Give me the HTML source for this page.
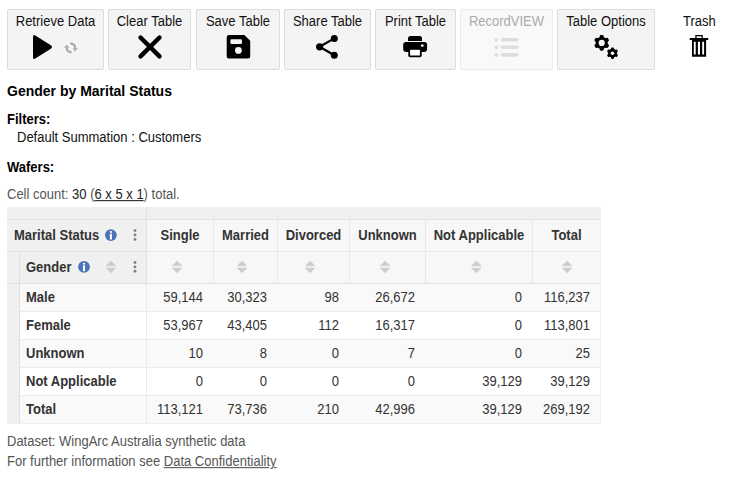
<!DOCTYPE html>
<html><head><meta charset="utf-8">
<style>
*{box-sizing:border-box;margin:0;padding:0}
html,body{width:752px;height:482px;overflow:hidden;background:#fff}
body{position:relative;font-family:"Liberation Sans",sans-serif;font-size:13px;color:#222}
.a{position:absolute;white-space:nowrap}
.btn{position:absolute;top:9px;height:61px;background:#f4f4f4;border:1px solid #dcdcdc;border-radius:2px}
.btn .l{position:absolute;left:0;right:0;top:4px;line-height:15px;text-align:center;color:#111}
.btn.dis{background:#f9f9f9;border-color:#ebebeb}
.btn.dis .l{color:#aaa}
svg{position:absolute;overflow:visible}
.t{font-size:13px;line-height:15px}
.b{font-weight:bold}
.tbl{position:absolute;left:7px;top:207px;width:594px;height:216px;background:#f0f0f0}
.hl{position:absolute;height:1px;background:#e2e2e2}
.vl{position:absolute;width:1px;background:#e6e6e6}
.hd{color:#333;font-weight:bold}
.num{color:#333;text-align:right}
.t,.btn .l{transform:scaleY(1.08);transform-origin:0 12px}
</style></head><body>

<!-- toolbar -->
<div class="btn" style="left:7px;width:97px"><div class="l">Retrieve Data</div></div>
<div class="btn" style="left:108px;width:83px"><div class="l">Clear Table</div></div>
<div class="btn" style="left:196px;width:84px"><div class="l">Save Table</div></div>
<div class="btn" style="left:284px;width:87px"><div class="l">Share Table</div></div>
<div class="btn" style="left:375px;width:81px"><div class="l">Print Table</div></div>
<div class="btn dis" style="left:460px;width:93px"><div class="l">RecordVIEW</div></div>
<div class="btn" style="left:557px;width:98px"><div class="l">Table Options</div></div>
<div class="a t" style="left:683px;top:14px;color:#111">Trash</div>

<!-- icons -->
<svg style="left:0;top:0" width="752" height="80" viewBox="0 0 752 80">
  <!-- play -->
  <path d="M35.3 35.4 L51.2 45.5 Q52.9 47 51.2 48.5 L35.3 58.6 Q33 59.8 33 57.4 L33 36.9 Q33 34.3 35.3 35.4 Z" fill="#000"/>
  <!-- sync -->
  <g fill="none" stroke="#a8a8a8" stroke-width="2.2">
    <path d="M70.3 43.6 A4.2 4.2 0 0 1 75.1 48.4"/>
    <path d="M71.6 52.2 A4.2 4.2 0 0 1 66.8 47.6"/>
  </g>
  <path d="M72.6 48.2 L77.8 48.2 L75.1 51.4 Z" fill="#a8a8a8"/>
  <path d="M64.1 47.8 L69.3 47.8 L66.7 44.5 Z" fill="#a8a8a8"/>
  <!-- x -->
  <g stroke="#000" stroke-width="4.4" stroke-linecap="round">
    <line x1="140.5" y1="37.5" x2="159.5" y2="56.4"/>
    <line x1="159.5" y1="37.5" x2="140.5" y2="56.4"/>
  </g>
  <!-- floppy -->
  <path fill="#000" fill-rule="evenodd" d="M229 35 L244.3 35 L250.2 40.8 L250.2 56.5 Q250.2 58.6 248.1 58.6 L228.8 58.6 Q226.7 58.6 226.7 56.5 L226.7 37.2 Q226.7 35 229 35 Z
    M231.6 39.2 L240.8 39.2 Q242 39.2 242 40.4 L242 42.8 Q242 44 240.8 44 L231.6 44 Q230.4 44 230.4 42.8 L230.4 40.4 Q230.4 39.2 231.6 39.2 Z
    M238.4 47 A3.4 3.4 0 1 0 238.4 53.8 A3.4 3.4 0 1 0 238.4 47 Z"/>
  <!-- share -->
  <g fill="#000">
    <circle cx="334.3" cy="38.4" r="3.5"/>
    <circle cx="319.6" cy="46.8" r="3.6"/>
    <circle cx="334.3" cy="55.3" r="3.5"/>
  </g>
  <g stroke="#000" stroke-width="2.2">
    <line x1="319.6" y1="46.8" x2="334.3" y2="38.4"/>
    <line x1="319.6" y1="46.8" x2="334.3" y2="55.3"/>
  </g>
  <!-- print -->
  <path fill="#000" d="M410.5 36 L419.5 36 Q422 36 422 38.5 L422 40.9 L408 40.9 L408 38.5 Q408 36 410.5 36 Z"/>
  <path fill="#000" d="M406 42 L424.3 42 Q427.1 42 427.1 44.8 L427.1 49.1 Q427.1 51.9 424.3 51.9 L406 51.9 Q403.2 51.9 403.2 49.1 L403.2 44.8 Q403.2 42 406 42 Z"/>
  <rect x="408.3" y="47" width="13.4" height="10.2" rx="1.7" fill="#000"/>
  <rect x="410.1" y="49.8" width="9.8" height="5.7" fill="#fff"/>
  <circle cx="422.3" cy="45.6" r="1.35" fill="#fff"/>
  <!-- list (disabled) -->
  <g fill="#ddd">
    <circle cx="496.3" cy="39.8" r="1.9"/>
    <circle cx="496.3" cy="47.3" r="1.9"/>
    <circle cx="496.3" cy="54.9" r="1.9"/>
  </g>
  <g stroke="#ddd" stroke-width="3.6" stroke-linecap="round">
    <line x1="502.6" y1="39.8" x2="516.8" y2="39.8"/>
    <line x1="502.6" y1="47.3" x2="516.8" y2="47.3"/>
    <line x1="502.6" y1="54.9" x2="516.8" y2="54.9"/>
  </g>
  <!-- gears -->
  <g>
    <circle cx="601.7" cy="42.9" r="6.1" fill="#000"/><rect x="599.70" y="35.10" width="4.0" height="7.8" rx="1.43" fill="#000" transform="rotate(0 601.7 42.9)"/><rect x="599.70" y="35.10" width="4.0" height="7.8" rx="1.43" fill="#000" transform="rotate(60 601.7 42.9)"/><rect x="599.70" y="35.10" width="4.0" height="7.8" rx="1.43" fill="#000" transform="rotate(120 601.7 42.9)"/><rect x="599.70" y="35.10" width="4.0" height="7.8" rx="1.43" fill="#000" transform="rotate(180 601.7 42.9)"/><rect x="599.70" y="35.10" width="4.0" height="7.8" rx="1.43" fill="#000" transform="rotate(240 601.7 42.9)"/><rect x="599.70" y="35.10" width="4.0" height="7.8" rx="1.43" fill="#000" transform="rotate(300 601.7 42.9)"/><circle cx="601.7" cy="42.9" r="3.1" fill="#f4f4f4"/>
    <circle cx="612.5" cy="53.2" r="4.4" fill="#000"/><rect x="611.00" y="47.50" width="3.0" height="5.7" rx="1.07" fill="#000" transform="rotate(0 612.5 53.2)"/><rect x="611.00" y="47.50" width="3.0" height="5.7" rx="1.07" fill="#000" transform="rotate(60 612.5 53.2)"/><rect x="611.00" y="47.50" width="3.0" height="5.7" rx="1.07" fill="#000" transform="rotate(120 612.5 53.2)"/><rect x="611.00" y="47.50" width="3.0" height="5.7" rx="1.07" fill="#000" transform="rotate(180 612.5 53.2)"/><rect x="611.00" y="47.50" width="3.0" height="5.7" rx="1.07" fill="#000" transform="rotate(240 612.5 53.2)"/><rect x="611.00" y="47.50" width="3.0" height="5.7" rx="1.07" fill="#000" transform="rotate(300 612.5 53.2)"/><circle cx="612.5" cy="53.2" r="1.8" fill="#f4f4f4"/>
  </g>
  <!-- trash -->
  <path fill="#000" fill-rule="evenodd" d="M695.3 35 L702.8 35 L702.8 38.2 L701.6 38.2 L701.6 36.2 L696.6 36.2 L696.6 38.2 L695.3 38.2 Z"/>
  <rect x="689.7" y="38" width="18.5" height="2" fill="#000"/>
  <path fill="#000" fill-rule="evenodd" d="M692 39.9 L706.1 39.9 L706.1 56.7 L692 56.7 Z M693.8 41.8 L695.7 41.8 L695.7 54.5 L693.8 54.5 Z M697.9 41.8 L700 41.8 L700 54.5 L697.9 54.5 Z M702.2 41.8 L704.1 41.8 L704.1 54.5 L702.2 54.5 Z"/>
</svg>

<!-- text -->
<div class="a b" style="left:7px;top:83px;font-size:14px;line-height:16px;color:#000">Gender by Marital Status</div>
<div class="a t b" style="left:7px;top:112px;color:#000">Filters:</div>
<div class="a t" style="left:17px;top:130px;color:#111">Default Summation : Customers</div>
<div class="a t b" style="left:7px;top:160px;color:#000">Wafers:</div>
<div class="a t" style="left:7px;top:187px;color:#555">Cell count: <span style="color:#222">30</span> (<span style="text-decoration:underline;color:#222">6 x 5 x 1</span>) total.</div>

<!-- table -->

<div id="tb">
<div class="a" style="left:7px;top:207px;width:594px;height:217px;background:#f0f0f0"></div>
<div class="a" style="left:147px;top:220px;width:454px;height:63px;background:#f7f7f7"></div>
<div class="a" style="left:20px;top:284px;width:581px;height:27px;background:#f9f9f9"></div>
<div class="a" style="left:20px;top:312px;width:581px;height:27px;background:#ffffff"></div>
<div class="a" style="left:20px;top:340px;width:581px;height:27px;background:#f9f9f9"></div>
<div class="a" style="left:20px;top:368px;width:581px;height:27px;background:#ffffff"></div>
<div class="a" style="left:20px;top:396px;width:581px;height:28px;background:#f9f9f9"></div>
<div class="a" style="left:7px;top:219px;width:594px;height:1px;background:#e0e0e0"></div>
<div class="a" style="left:7px;top:251px;width:140px;height:1px;background:#e0e0e0"></div>
<div class="a" style="left:147px;top:251px;width:454px;height:1px;background:#ebebeb"></div>
<div class="a" style="left:7px;top:283px;width:594px;height:1px;background:#e0e0e0"></div>
<div class="a" style="left:20px;top:311px;width:581px;height:1px;background:#ebebeb"></div>
<div class="a" style="left:20px;top:339px;width:581px;height:1px;background:#ebebeb"></div>
<div class="a" style="left:20px;top:367px;width:581px;height:1px;background:#ebebeb"></div>
<div class="a" style="left:20px;top:395px;width:581px;height:1px;background:#ebebeb"></div>
<div class="a" style="left:146px;top:207px;width:1px;height:77px;background:#e0e0e0"></div>
<div class="a" style="left:146px;top:284px;width:1px;height:140px;background:#ebebeb"></div>
<div class="a" style="left:19px;top:252px;width:1px;height:172px;background:#e0e0e0"></div>
<div class="a" style="left:213px;top:220px;width:1px;height:63px;background:#e8e8e8"></div>
<div class="a" style="left:277px;top:220px;width:1px;height:63px;background:#e8e8e8"></div>
<div class="a" style="left:349px;top:220px;width:1px;height:63px;background:#e8e8e8"></div>
<div class="a" style="left:425px;top:220px;width:1px;height:63px;background:#e8e8e8"></div>
<div class="a" style="left:532px;top:220px;width:1px;height:63px;background:#e8e8e8"></div>
<div class="a" style="left:600px;top:207px;width:1px;height:217px;background:#efefef"></div>
<div class="a" style="left:20px;top:423px;width:581px;height:1px;background:#efefef"></div>
<div class="a t hd" style="left:14px;top:228px;">Marital Status</div>
<div class="a t hd" style="left:26px;top:260px;">Gender</div>
<div class="a t hd" style="left:147px;width:66px;top:228px;text-align:center">Single</div>
<div class="a t hd" style="left:214px;width:63px;top:228px;text-align:center">Married</div>
<div class="a t hd" style="left:278px;width:71px;top:228px;text-align:center">Divorced</div>
<div class="a t hd" style="left:350px;width:75px;top:228px;text-align:center">Unknown</div>
<div class="a t hd" style="left:426px;width:106px;top:228px;text-align:center">Not Applicable</div>
<div class="a t hd" style="left:533px;width:67px;top:228px;text-align:center">Total</div>
<div class="a t hd" style="left:26px;top:290px;">Male</div>
<div class="a t num" style="right:549px;top:290px">59,144</div>
<div class="a t num" style="right:485px;top:290px">30,323</div>
<div class="a t num" style="right:413px;top:290px">98</div>
<div class="a t num" style="right:337px;top:290px">26,672</div>
<div class="a t num" style="right:230px;top:290px">0</div>
<div class="a t num" style="right:162px;top:290px">116,237</div>
<div class="a t hd" style="left:26px;top:318px;">Female</div>
<div class="a t num" style="right:549px;top:318px">53,967</div>
<div class="a t num" style="right:485px;top:318px">43,405</div>
<div class="a t num" style="right:413px;top:318px">112</div>
<div class="a t num" style="right:337px;top:318px">16,317</div>
<div class="a t num" style="right:230px;top:318px">0</div>
<div class="a t num" style="right:162px;top:318px">113,801</div>
<div class="a t hd" style="left:26px;top:346px;">Unknown</div>
<div class="a t num" style="right:549px;top:346px">10</div>
<div class="a t num" style="right:485px;top:346px">8</div>
<div class="a t num" style="right:413px;top:346px">0</div>
<div class="a t num" style="right:337px;top:346px">7</div>
<div class="a t num" style="right:230px;top:346px">0</div>
<div class="a t num" style="right:162px;top:346px">25</div>
<div class="a t hd" style="left:26px;top:374px;">Not Applicable</div>
<div class="a t num" style="right:549px;top:374px">0</div>
<div class="a t num" style="right:485px;top:374px">0</div>
<div class="a t num" style="right:413px;top:374px">0</div>
<div class="a t num" style="right:337px;top:374px">0</div>
<div class="a t num" style="right:230px;top:374px">39,129</div>
<div class="a t num" style="right:162px;top:374px">39,129</div>
<div class="a t hd" style="left:26px;top:402px;">Total</div>
<div class="a t num" style="right:549px;top:402px">113,121</div>
<div class="a t num" style="right:485px;top:402px">73,736</div>
<div class="a t num" style="right:413px;top:402px">210</div>
<div class="a t num" style="right:337px;top:402px">42,996</div>
<div class="a t num" style="right:230px;top:402px">39,129</div>
<div class="a t num" style="right:162px;top:402px">269,192</div>
<svg class="a" style="left:0;top:0" width="752" height="482" viewBox="0 0 752 482"><circle cx="110.9" cy="235.1" r="5.9" fill="#4a74b4"/><rect x="109.85000000000001" y="231.1" width="2.1" height="1.7" fill="#fff"/><rect x="109.85000000000001" y="233.7" width="2.1" height="5.8" fill="#fff"/><circle cx="135" cy="230.6" r="1.45" fill="#808080"/><circle cx="135" cy="235" r="1.45" fill="#808080"/><circle cx="135" cy="239.4" r="1.45" fill="#808080"/><circle cx="84" cy="266.8" r="5.9" fill="#4a74b4"/><rect x="82.95" y="262.8" width="2.1" height="1.7" fill="#fff"/><rect x="82.95" y="265.40000000000003" width="2.1" height="5.8" fill="#fff"/><path d="M106.20 265.80 L110.90 261.10 L115.60 265.80 Z" fill="#ccc" stroke="#ccc" stroke-width="0.7" stroke-linejoin="round"/><path d="M106.20 268.20 L110.90 272.70 L115.60 268.20 Z" fill="#ccc" stroke="#ccc" stroke-width="0.7" stroke-linejoin="round"/><circle cx="135" cy="262.5" r="1.45" fill="#808080"/><circle cx="135" cy="266.9" r="1.45" fill="#808080"/><circle cx="135" cy="271.29999999999995" r="1.45" fill="#808080"/><path d="M172.40 265.80 L177.10 261.10 L181.80 265.80 Z" fill="#ccc" stroke="#ccc" stroke-width="0.7" stroke-linejoin="round"/><path d="M172.40 268.20 L177.10 272.70 L181.80 268.20 Z" fill="#ccc" stroke="#ccc" stroke-width="0.7" stroke-linejoin="round"/><path d="M237.30 265.80 L242.00 261.10 L246.70 265.80 Z" fill="#ccc" stroke="#ccc" stroke-width="0.7" stroke-linejoin="round"/><path d="M237.30 268.20 L242.00 272.70 L246.70 268.20 Z" fill="#ccc" stroke="#ccc" stroke-width="0.7" stroke-linejoin="round"/><path d="M305.40 265.80 L310.10 261.10 L314.80 265.80 Z" fill="#ccc" stroke="#ccc" stroke-width="0.7" stroke-linejoin="round"/><path d="M305.40 268.20 L310.10 272.70 L314.80 268.20 Z" fill="#ccc" stroke="#ccc" stroke-width="0.7" stroke-linejoin="round"/><path d="M380.40 265.80 L385.10 261.10 L389.80 265.80 Z" fill="#ccc" stroke="#ccc" stroke-width="0.7" stroke-linejoin="round"/><path d="M380.40 268.20 L385.10 272.70 L389.80 268.20 Z" fill="#ccc" stroke="#ccc" stroke-width="0.7" stroke-linejoin="round"/><path d="M471.70 265.80 L476.40 261.10 L481.10 265.80 Z" fill="#ccc" stroke="#ccc" stroke-width="0.7" stroke-linejoin="round"/><path d="M471.70 268.20 L476.40 272.70 L481.10 268.20 Z" fill="#ccc" stroke="#ccc" stroke-width="0.7" stroke-linejoin="round"/><path d="M562.40 265.80 L567.10 261.10 L571.80 265.80 Z" fill="#ccc" stroke="#ccc" stroke-width="0.7" stroke-linejoin="round"/><path d="M562.40 268.20 L567.10 272.70 L571.80 268.20 Z" fill="#ccc" stroke="#ccc" stroke-width="0.7" stroke-linejoin="round"/></svg>
</div><!--/tb-->

<!-- footer -->
<div class="a t" style="left:7px;top:434px;color:#555">Dataset: WingArc Australia synthetic data</div>
<div class="a t" style="left:7px;top:454px;color:#555">For further information see <span style="text-decoration:underline">Data Confidentiality</span></div>
</body></html>
